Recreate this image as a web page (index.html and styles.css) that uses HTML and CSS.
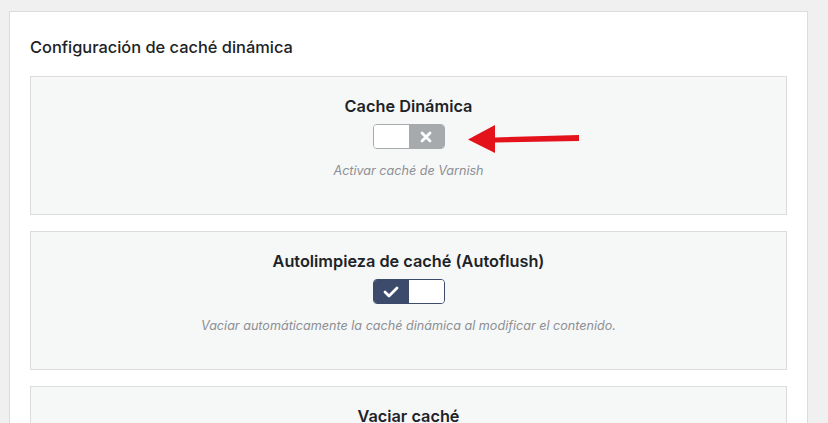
FILE: index.html
```html
<!DOCTYPE html>
<html lang="es">
<head>
<meta charset="utf-8">
<link rel="stylesheet" href="styles.css">
</head>
<body>
<div class="panel">
  <h2 class="panel-title">Configuración de caché dinámica</h2>
  <div class="card">
    <h3 class="card-title">Cache Dinámica</h3>
    <div class="toggle-row">
      <div class="toggle off">
        <span class="half blank"></span>
        <span class="half grey">
          <svg width="12" height="12" viewBox="0 0 12 12"><path d="M2 2 L10 10 M10 2 L2 10" stroke="#fff" stroke-width="2.8" stroke-linecap="round"/></svg>
        </span>
      </div>
      <svg class="arrow" width="116" height="30" viewBox="0 0 116 30"><path d="M26 13.5 L111 11 L111 17 L26 18.5 Z" fill="#e3121b"/><path d="M0 15.5 L27 1 L27 29 Z" fill="#e3121b"/></svg>
    </div>
    <p class="desc">Activar caché de Varnish</p>
  </div>
  <div class="card">
    <h3 class="card-title">Autolimpieza de caché (Autoflush)</h3>
    <div class="toggle-row">
      <div class="toggle on">
        <span class="half navy">
          <svg width="16" height="12" viewBox="0 0 16 12"><path d="M2 6 L6 10 L14 2" fill="none" stroke="#fff" stroke-width="2.8" stroke-linecap="round" stroke-linejoin="round"/></svg>
        </span>
        <span class="half blank"></span>
      </div>
    </div>
    <p class="desc">Vaciar automáticamente la caché dinámica al modificar el contenido.</p>
  </div>
  <div class="card">
    <h3 class="card-title">Vaciar caché</h3>
  </div>
</div>
</body>
</html>
```
FILE: styles.css
```css
html, body {
  margin: 0;
  padding: 0;
}
body {
  background: #f0f0f1;
  font-family: Inter, "Noto Sans", "Liberation Sans", sans-serif;
  color: #1d2327;
  padding: 11px 20px 0 9px;
  height: 423px;
  overflow: hidden;
  box-sizing: border-box;
}
.panel {
  background: #fff;
  border: 1px solid #dcdcde;
  border-bottom: none;
  padding: 25px 20px 0 20px;
  display: flex;
  flex-direction: column;
  gap: 16px;
}
.panel-title {
  margin: 0 0 3px 0;
  font-size: 16.4px;
  font-weight: 500;
  line-height: 20px;
}
.card {
  background: #f6f7f7;
  border: 1px solid #dcdcde;
  display: flex;
  flex-direction: column;
  align-items: center;
  padding: 19px 20px 35px;
  min-height: 83px;
}
.card-title {
  margin: 0;
  font-size: 16.3px;
  font-weight: 600;
  line-height: 20px;
}
.toggle-row {
  position: relative;
  margin-top: 8px;
}
.toggle {
  display: flex;
  width: 72px;
  height: 25px;
  border-radius: 4px;
  overflow: hidden;
  box-sizing: border-box;
}
.toggle.off { border: 1px solid #a7aaad; }
.toggle.on { border: 1px solid #3c4a6c; }
.half {
  flex: 1;
  display: flex;
  align-items: center;
  justify-content: center;
}
.blank { background: #fff; }
.grey { background: #a7aaad; }
.navy { background: #3c4a6c; }
.arrow {
  position: absolute;
  left: 95px;
  top: 0;
}
.desc {
  margin: 14px 0 0;
  font-size: 12.6px;
  font-style: italic;
  color: #8c8f94;
  line-height: 16px;
}
```
